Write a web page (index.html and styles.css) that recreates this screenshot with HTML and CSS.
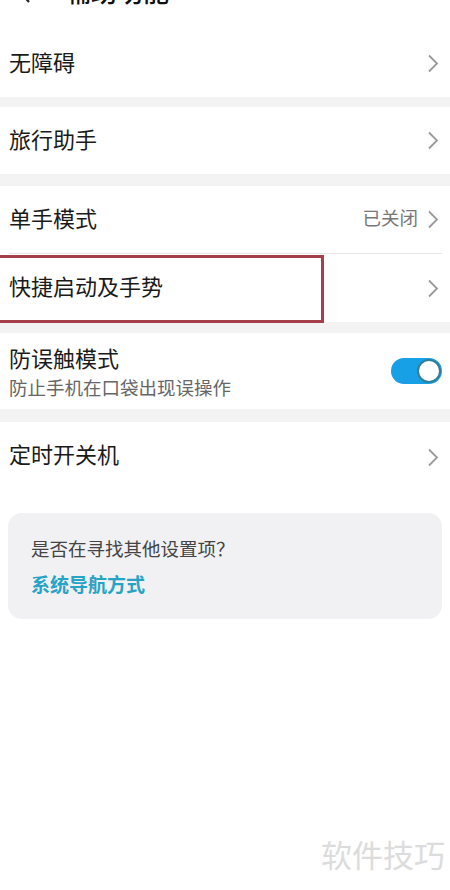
FILE: index.html
```html
<!DOCTYPE html>
<html lang="zh-CN">
<head>
<meta charset="utf-8">
<title>辅助功能</title>
<link rel="stylesheet" href="styles.css">
</head>
<body>
<div class="page">
  <header class="header">
    <div class="header-inner">
      <svg class="back" width="16" height="26" viewBox="0 0 16 26"><path d="M13 2 L3 13 L13 24" fill="none" stroke="#222" stroke-width="2.2"/></svg>
      <span class="title">辅助功能</span>
    </div>
  </header>

  <div class="group">
    <div class="row">
      <span class="label">无障碍</span>
      <svg class="chev" width="12" height="19" viewBox="0 0 12 19"><path d="M2 1.5 L10 9.5 L2 17.5" fill="none" stroke="#9a9a9a" stroke-width="1.8"/></svg>
    </div>
  </div>
  <div class="band band-10"></div>

  <div class="group">
    <div class="row">
      <span class="label">旅行助手</span>
      <svg class="chev" width="12" height="19" viewBox="0 0 12 19"><path d="M2 1.5 L10 9.5 L2 17.5" fill="none" stroke="#9a9a9a" stroke-width="1.8"/></svg>
    </div>
  </div>
  <div class="band band-12"></div>

  <div class="group">
    <div class="row">
      <span class="label">单手模式</span>
      <span class="right">
        <span class="value">已关闭</span>
        <svg class="chev" width="12" height="19" viewBox="0 0 12 19"><path d="M2 1.5 L10 9.5 L2 17.5" fill="none" stroke="#9a9a9a" stroke-width="1.8"/></svg>
      </span>
    </div>
    <div class="divider"></div>
    <div class="row row-marked">
      <span class="label">快捷启动及手势</span>
      <svg class="chev" width="12" height="19" viewBox="0 0 12 19"><path d="M2 1.5 L10 9.5 L2 17.5" fill="none" stroke="#9a9a9a" stroke-width="1.8"/></svg>
      <div class="mark"></div>
    </div>
  </div>
  <div class="band band-11"></div>

  <div class="group">
    <div class="row row-two">
      <div class="texts">
        <span class="label">防误触模式</span>
        <span class="sub">防止手机在口袋出现误操作</span>
      </div>
      <div class="toggle"><div class="knob"></div></div>
    </div>
  </div>
  <div class="band band-13"></div>

  <div class="group">
    <div class="row row-last">
      <span class="label">定时开关机</span>
      <svg class="chev" width="12" height="19" viewBox="0 0 12 19"><path d="M2 1.5 L10 9.5 L2 17.5" fill="none" stroke="#9a9a9a" stroke-width="1.8"/></svg>
    </div>
  </div>

  <div class="card">
    <div class="card-q">是否在寻找其他设置项？</div>
    <div class="card-link">系统导航方式</div>
  </div>

  <div class="watermark">软件技巧</div>
</div>
</body>
</html>
```
FILE: styles.css
```css
* { box-sizing: border-box; }
html, body {
  margin: 0;
  padding: 0;
  background: #ffffff;
}
body {
  font-family: "Noto Sans CJK SC", "Noto Sans", sans-serif;
  color: #1a1a1a;
}
.page {
  position: relative;
  width: 450px;
  height: 890px;
  overflow: hidden;
}
.header {
  display: flex;
  height: 30px;
}
.header-inner {
  display: flex;
  align-items: center;
  height: 30px;
  margin-top: -24px;
  padding-left: 16px;
}
.back { display: block; }
.title {
  margin-left: 33px;
  font-size: 26px;
  line-height: 30px;
  font-weight: 500;
  color: #111;
}
.group { background: #fff; }
.row {
  display: flex;
  align-items: center;
  justify-content: space-between;
  height: 67px;
  padding: 0 11px 0 9px;
}
.row-marked {
  position: relative;
  height: 68px;
}
.row-two {
  height: 76px;
  padding-right: 8px;
}
.row-last { height: 70px; }
.label {
  font-size: 22px;
  line-height: 28px;
  color: #1a1a1a;
}
.row > .label,
.value { margin-bottom: 6px; }
.row-last > .label { margin-bottom: 8px; }
.chev { display: block; }
.right {
  display: flex;
  align-items: center;
  gap: 9px;
}
.value {
  font-size: 18.5px;
  color: #777;
}
.divider {
  height: 1px;
  margin: 0 8px 0 9px;
  background: #e6e6e6;
}
.band { background: #f3f3f3; }
.band-10 { height: 10px; }
.band-11 { height: 11px; }
.band-12 { height: 12px; }
.band-13 { height: 13px; }
.texts {
  display: flex;
  flex-direction: column;
  gap: 3px;
}
.sub {
  font-size: 18.5px;
  line-height: 26px;
  color: #666;
}
.toggle {
  position: relative;
  width: 51px;
  height: 26px;
  border-radius: 13px;
  background: #18a0e6;
}
.knob {
  position: absolute;
  right: 1px;
  top: 1px;
  width: 24px;
  height: 24px;
  border-radius: 50%;
  background: #fff;
  border: 2px solid #2f7f98;
}
.mark {
  position: absolute;
  left: -4px;
  top: 1px;
  width: 328px;
  height: 68px;
  border: 3px solid #a53f49;
}
.card {
  margin: 21px 8px 0 8px;
  height: 106px;
  border-radius: 14px;
  background: #f1f1f3;
  padding: 22px 0 0 23px;
}
.card-q {
  font-size: 18.5px;
  line-height: 26px;
  color: #444;
}
.card-link {
  margin-top: 10px;
  font-size: 19px;
  line-height: 26px;
  font-weight: 700;
  color: #27a3c6;
}
.watermark {
  position: absolute;
  left: 321px;
  top: 834px;
  font-size: 31px;
  line-height: 40px;
  color: #dcdcdc;
}
```
